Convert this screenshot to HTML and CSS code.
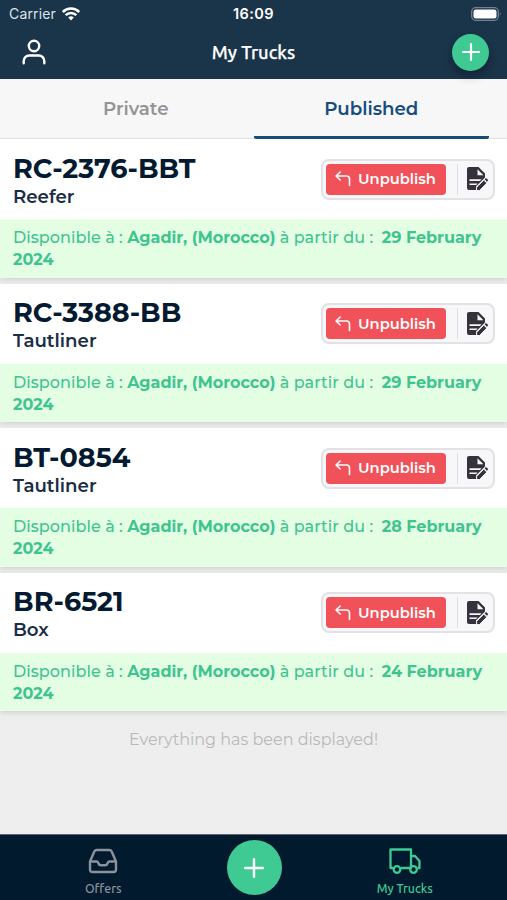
FILE: index.html
```html
<!DOCTYPE html>
<html lang="en">
	<head>
		<meta charset="utf-8">
		<title>My Trucks</title>
		<link rel="stylesheet" href="styles.css">
	</head>
	<body>
		<svg class="defs">
			<symbol id="back" viewBox="0 0 16 16">
				<path d="M5.200 1L1 5l4.200 4M1 5h10.500a3 3 0 0 1 3 3v6.500" fill="none" stroke="currentColor" stroke-width="1.600" stroke-linecap="round" stroke-linejoin="round"/>
			</symbol>
			<symbol id="edit" viewBox="0 0 21 24">
				<path d="M2 0H11.500L18 6.500V10.500L9 19.500V23H2A2 2 0 0 1 0 21V2A2 2 0 0 1 2 0z" fill="currentColor"/>
				<path d="M10.500 2.300v5.900h5.900zM2.500 12.300h12l-1.500 1.600H2.500zM2.500 16.500h8.200l-1.500 1.600H2.500z" fill="#f7f7f9"/>
				<path d="M9.600 23.500v-3.200l7.200-7.200 3 3-7.200 7.400z" fill="currentColor" stroke="#f7f7f9"/>
				<path d="M17.600 12.300l.8-.8q.7-.5 1.300 0l1 1q.6.700 0 1.400l-.8.800z" fill="currentColor"/>
			</symbol>
			<symbol id="plus" viewBox="0 0 20 20">
				<path d="M10 2v16M2 10h16" stroke="currentColor" stroke-width="2.200" stroke-linecap="round"/>
			</symbol>
		</svg>
		<header>
			<div class="status">
				<div class="carrier">
					<span>Carrier</span>
					<svg width="18" height="14" viewBox="0 0 18 14" fill="none" stroke="#fff" stroke-width="2.500">
						<path d="M.8 5a11.500 11.500 0 0 1 16.400 0M3.700 8.200a7.500 7.500 0 0 1 10.600 0"/>
						<path d="M9 13.500l-2.800-3a4 4 0 0 1 5.600 0z" fill="#fff" stroke="none"/>
					</svg>
				</div>
				<span class="time">16:09</span>
				<svg class="battery" width="31" height="14" viewBox="0 0 31 14">
					<rect x=".7" y=".7" width="26.600" height="12.600" rx="4" fill="none" stroke="#75818e" stroke-width="1.300"/>
					<rect x="2.500" y="2.500" width="23" height="9" rx="2.300" fill="#fff"/>
					<path d="M28.800 4.800q1.800 2.200 0 4.400z" fill="#75818e"/>
				</svg>
			</div>
			<div class="bar">
				<svg width="24" height="26" viewBox="0 0 24 26" fill="none" stroke="#fff" stroke-width="2.400" stroke-linecap="round">
					<circle cx="12" cy="7" r="5.200"/>
					<path d="M1.700 24.300V22a5.500 5.500 0 0 1 5.500-5.500h9.600a5.500 5.500 0 0 1 5.500 5.500v2.300"/>
				</svg>
				<h1>My Trucks</h1>
				<button class="add"><svg width="20" height="20"><use href="#plus"/></svg></button>
			</div>
		</header>
		<nav class="tabs">
			<a class="tab">Private</a>
			<a class="tab active">Published</a>
		</nav>
		<main>
			<section class="card">
				<div class="top">
					<div>
						<h2>RC-2376-BBT</h2>
						<p class="type">Reefer</p>
					</div>
					<div class="actions">
						<button class="unpublish"><svg width="16" height="16"><use href="#back"/></svg><span>Unpublish</span></button>
						<button class="edit"><svg width="21" height="24"><use href="#edit"/></svg></button>
					</div>
				</div>
				<p class="info"><span>Disponible à :</span> <b>Agadir, (Morocco)</b> <span>à partir du :&nbsp;</span> <b>29 February</b> <b>2024</b></p>
			</section>
			<section class="card">
				<div class="top">
					<div>
						<h2>RC-3388-BB</h2>
						<p class="type">Tautliner</p>
					</div>
					<div class="actions">
						<button class="unpublish"><svg width="16" height="16"><use href="#back"/></svg><span>Unpublish</span></button>
						<button class="edit"><svg width="21" height="24"><use href="#edit"/></svg></button>
					</div>
				</div>
				<p class="info"><span>Disponible à :</span> <b>Agadir, (Morocco)</b> <span>à partir du :&nbsp;</span> <b>29 February</b> <b>2024</b></p>
			</section>
			<section class="card">
				<div class="top">
					<div>
						<h2>BT-0854</h2>
						<p class="type">Tautliner</p>
					</div>
					<div class="actions">
						<button class="unpublish"><svg width="16" height="16"><use href="#back"/></svg><span>Unpublish</span></button>
						<button class="edit"><svg width="21" height="24"><use href="#edit"/></svg></button>
					</div>
				</div>
				<p class="info"><span>Disponible à :</span> <b>Agadir, (Morocco)</b> <span>à partir du :&nbsp;</span> <b>28 February</b> <b>2024</b></p>
			</section>
			<section class="card">
				<div class="top">
					<div>
						<h2>BR-6521</h2>
						<p class="type">Box</p>
					</div>
					<div class="actions">
						<button class="unpublish"><svg width="16" height="16"><use href="#back"/></svg><span>Unpublish</span></button>
						<button class="edit"><svg width="21" height="24"><use href="#edit"/></svg></button>
					</div>
				</div>
				<p class="info"><span>Disponible à :</span> <b>Agadir, (Morocco)</b> <span>à partir du :&nbsp;</span> <b>24 February</b> <b>2024</b></p>
			</section>
			<p class="end">Everything has been displayed!</p>
		</main>
		<footer>
			<a class="item">
				<svg width="30" height="26" viewBox="0 0 30 26" fill="none" stroke="currentColor" stroke-width="2.400" stroke-linejoin="round">
					<path d="M2 13.500L6.300 3.500Q7 2 8.800 2h12.400q1.800 0 2.500 1.500l4.300 10v8q0 2.500-2.500 2.500h-21Q2 24 2 21.500zM2 13.500h6.500q1.500 0 2 2 .6 1.800 2.500 1.800h4q1.900 0 2.500-1.800.5-2 2-2H28"/>
				</svg>
				<span>Offers</span>
			</a>
			<button class="main-add"><svg width="22" height="22"><use href="#plus"/></svg></button>
			<a class="item active">
				<svg width="32" height="26" viewBox="0 0 32 26" fill="none" stroke="currentColor" stroke-width="2.300" stroke-linejoin="round">
					<path d="M4 20H1.500V1.500H22V20H12M22 8h4l4.500 5v7H28.500"/>
					<circle cx="8" cy="21.500" r="3.300"/>
					<circle cx="24.500" cy="21.500" r="3.300"/>
				</svg>
				<span>My Trucks</span>
			</a>
		</footer>
	</body>
</html>
```
FILE: styles.css
```css
*{
	margin: 0;
	padding: 0;
	box-sizing: border-box;
}
body{
	display: flex;
	flex-direction: column;
	height: 900px;
	overflow: hidden;
	background: #eee;
	font-family: Montserrat, Inter, sans-serif;
}
button{
	border: none;
	font-family: inherit;
}
svg{
	display: block;
	flex: none;
}
.defs{
	position: absolute;
	width: 0;
	height: 0;
}
header{
	height: 79px;
	background: #1a344a;
	color: #fff;
	position: relative;
}
.status{
	display: grid;
	grid-template-columns: 1fr auto 1fr;
	align-items: center;
	height: 27px;
	padding: 0 5px 0 9px;
}
.carrier{
	display: flex;
	align-items: center;
	gap: 6px;
	font: 14px/20px Inter, sans-serif;
	letter-spacing: 0.15px;
	color: #dde3e8;
}
.time{
	position: relative;
	left: -2px;
	font: 600 14.500px/20px Inter, sans-serif;
	letter-spacing: 0.4px;
}
.battery{
	justify-self: end;
}
.bar{
	display: grid;
	grid-template-columns: 1fr auto 1fr;
	align-items: center;
	height: 50px;
	padding: 0 18px 0 22px;
}
h1{
	position: relative;
	left: -2px;
	font: 500 18.300px/24px Ubuntu, "Noto Sans", sans-serif;
	-webkit-text-stroke: 0.25px #fff;
}
.add{
	display: flex;
	align-items: center;
	justify-content: center;
	justify-self: end;
	width: 37px;
	height: 37px;
	border-radius: 50%;
	background: #3fca94;
	color: #fff;
	box-shadow: 0 5px 10px rgba(0,0,0,.3);
}
.tabs{
	display: flex;
	height: 60px;
	padding: 0 18px;
	background: #f7f7f7;
	border-bottom: 1px solid #e2e5e7;
}
.tab{
	flex: 1;
	height: 60px;
	text-align: center;
	font-size: 18.200px;
	line-height: 60px;
	font-weight: 600;
	color: #949494;
}
.tab.active{
	color: #164d7e;
	border-bottom: 3px solid #164d7e;
	border-radius: 2px;
}
main{
	flex: 1;
}
.card{
	height: 138.600px;
	margin-bottom: 6px;
	background: #fff;
	box-shadow: 0 2px 5px rgba(0,0,0,.12);
}
.top{
	display: flex;
	justify-content: space-between;
	height: 80px;
	padding: 12.500px 12px 0 13px;
}
h2{
	font-size: 27px;
	line-height: 34px;
	font-weight: 700;
	color: #031a30;
}
.type{
	font-size: 18.200px;
	line-height: 22px;
	font-weight: 600;
	color: #1b2d45;
}
.actions{
	display: flex;
	align-items: center;
	width: 174px;
	height: 41px;
	margin-top: 7px;
	padding-left: 3px;
	border: 2px solid #e2e2e4;
	border-radius: 8px;
	background: #f7f7f9;
}
.unpublish{
	display: flex;
	align-items: center;
	gap: 7px;
	width: 120px;
	height: 31px;
	padding-left: 9px;
	border-radius: 4px;
	background: #f15159;
	color: #fff;
	font-size: 14.700px;
	font-weight: 600;
}
.edit{
	height: 31px;
	margin-left: 11px;
	padding-left: 9px;
	border-left: 1px solid #ddd;
	background: none;
	color: #35323e;
}
.info{
	height: 58.600px;
	padding: 8px 13px 0;
	background: #e4fee4;
	color: #3fc490;
	font-size: 16px;
	line-height: 22px;
	font-weight: 500;
}
.info span{
	letter-spacing: 0.05px;
}
.info b{
	font-weight: 700;
}
.end{
	padding-top: 12px;
	text-align: center;
	font-size: 16px;
	line-height: 22px;
	color: #b9b9b9;
}
footer{
	display: grid;
	grid-template-columns: 1fr 56px 1fr;
	height: 66px;
	padding-left: 2px;
	border-top: 1px solid #5c6876;
	background: #011a2e;
}
.item{
	display: flex;
	flex-direction: column;
	align-items: center;
	padding: 13px 22px 0 0;
	color: #8b929b;
	font: 500 12.300px/16px Ubuntu, "Noto Sans", sans-serif;
}
.item span{
	margin-top: 7px;
}
.item.active{
	padding-right: 0;
	padding-left: 20px;
	color: #3fca94;
}
.main-add{
	display: flex;
	align-items: center;
	justify-content: center;
	width: 55px;
	height: 55px;
	margin-top: 5px;
	border-radius: 50%;
	background: #3fca94;
	color: #fff;
}
```
